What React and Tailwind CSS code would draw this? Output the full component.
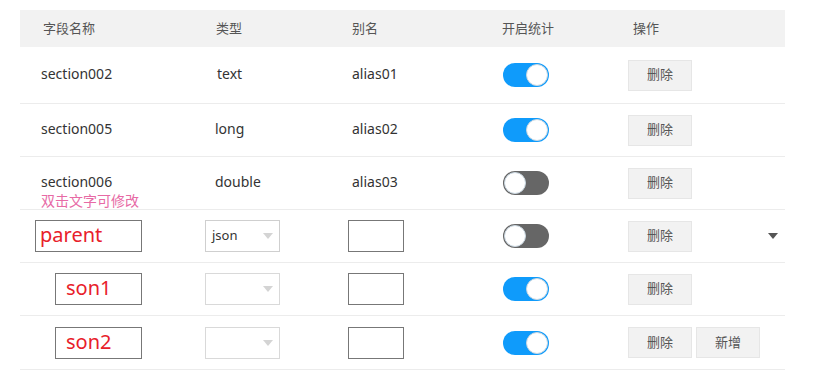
import React from 'react';

const rows = [
  { kind: 'text', name: 'section002', type: 'text', typePad: 'pl-3', alias: 'alias01', on: true, h: 'h-[57px]' },
  { kind: 'text', name: 'section005', type: 'long', typePad: 'pl-[10px]', alias: 'alias02', on: true, h: 'h-[53px]' },
  { kind: 'text', name: 'section006', type: 'double', typePad: 'pl-[10px]', alias: 'alias03', on: false, h: 'h-[53px]', hint: true },
  { kind: 'edit', name: 'parent', select: 'json', on: false, h: 'h-[53px]', parent: true, arrow: true },
  { kind: 'edit', name: 'son1', on: true, h: 'h-[53px]' },
  { kind: 'edit', name: 'son2', on: true, h: 'h-[54px]', add: true },
];

const cols = 'grid grid-cols-[185px_143px_154px_126px_157px]';

const Toggle = ({ on }) => (
  <div
    className={`relative w-[46px] h-[24px] rounded-full ${on ? 'bg-[#0f9bfb]' : 'bg-[#666666]'}`}
  >
    <div
      className={`absolute top-[1px] w-[22px] h-[22px] rounded-full bg-white border border-[#c9d6e0] ${on ? 'right-[1px]' : 'left-[1px]'}`}
    />
  </div>
);

const Btn = ({ children }) => (
  <button className="w-[64px] h-[31px] bg-[#f2f2f2] border border-[#e6e6e6] text-[13px] text-[#555]">
    {children}
  </button>
);

const Select = ({ value }) => (
  <div
    className={`w-[75px] h-[32px] border ${value ? 'border-[#cfcfcf]' : 'border-[#d9d9d9]'} flex items-center justify-between pl-[6px] pr-[6px]`}
  >
    <span className="text-[13px] text-[#333]">{value}</span>
    <svg width="10" height="6" viewBox="0 0 10 6">
      <path d="M0 0 L10 0 L5 6 Z" fill="#d4d4d4" />
    </svg>
  </div>
);

export default function App() {
  return (
    <div
      className="w-[819px] h-[373px] bg-white pt-[10px] pl-[20px]"
      style={{ fontFamily: '"Noto Sans", "Noto Sans CJK SC", sans-serif' }}
    >
      <div className="w-[765px]">
        <div className={`${cols} h-[37px] items-center bg-[#f2f2f2] text-[13px] text-[#555]`}>
          <div className="pl-[23px]">字段名称</div>
          <div className="pl-[11px]">类型</div>
          <div className="pl-[4px]">别名</div>
          <div>开启统计</div>
          <div className="pl-[5px]">操作</div>
        </div>

        {rows.map((r) => (
          <div key={r.name} className={`${cols} ${r.h} items-center border-b border-[#ececec] text-[14px] text-[#333]`}>
            {r.kind === 'text' ? (
              <>
                <div className="relative pl-[21px] pb-[3px]">
                  {r.name}
                  {r.hint && (
                    <div className="absolute left-[21px] top-[23px] text-[14px] leading-none text-[#e76aa5] whitespace-nowrap">
                      双击文字可修改
                    </div>
                  )}
                </div>
                <div className={`${r.typePad} pb-[3px]`}>{r.type}</div>
                <div className="pl-[4px] pb-[3px]">{r.alias}</div>
              </>
            ) : (
              <>
                <div className={r.parent ? 'pl-[15px]' : 'pl-[35px]'}>
                  <div
                    className={`${r.parent ? 'w-[107px] pl-[4px]' : 'w-[87px] pl-[10px]'} h-[32px] border border-[#777] flex items-center pb-[2px] text-[20px] text-[#e8202a] leading-none`}
                  >
                    {r.name}
                  </div>
                </div>
                <div>
                  <Select value={r.select} />
                </div>
                <div>
                  <div className="w-[56px] h-[32px] border border-[#777]" />
                </div>
              </>
            )}
            <div className="pl-[1px]">
              <Toggle on={r.on} />
            </div>
            <div className="flex items-center gap-[4px]">
              <Btn>删除</Btn>
              {r.add && <Btn>新增</Btn>}
              {r.arrow && (
                <svg className="ml-auto mr-[7px]" width="10" height="6" viewBox="0 0 10 6">
                  <path d="M0 0 L10 0 L5 6 Z" fill="#555" />
                </svg>
              )}
            </div>
          </div>
        ))}
      </div>
    </div>
  );
}
